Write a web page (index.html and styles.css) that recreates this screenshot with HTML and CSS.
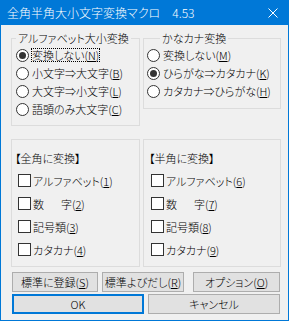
FILE: index.html
```html
<!DOCTYPE html>
<html lang="ja">
<head>
<meta charset="utf-8">
<title>全角半角大小文字変換マクロ</title>
<link rel="stylesheet" href="styles.css">
</head>
<body>
<div class="window">
  <div class="titlebar">
    <span class="title">全角半角大小文字変換マクロ　4.53</span>
    <svg class="close" width="10" height="10" viewBox="0 0 10 10"><path d="M0.5 0.5L9.5 9.5M9.5 0.5L0.5 9.5" stroke="#ffffff" stroke-width="1" fill="none"/></svg>
  </div>
  <div class="content">
    <div class="groups">
      <fieldset class="box box-alpha">
        <legend class="legend legend-alpha">アルファベット大小変換</legend>
        <div class="opt opt-l"><span class="radio on"></span><span class="txt focus">変換しない(<u>N</u>)</span></div>
        <div class="opt opt-l"><span class="radio"></span><span class="txt">小文字⇒大文字(<u>B</u>)</span></div>
        <div class="opt opt-l"><span class="radio"></span><span class="txt">大文字⇒小文字(<u>L</u>)</span></div>
        <div class="opt opt-l"><span class="radio"></span><span class="txt">語頭のみ大文字(<u>C</u>)</span></div>
      </fieldset>
      <fieldset class="box box-kana">
        <legend class="legend legend-kana">かなカナ変換</legend>
        <div class="opt opt-r"><span class="radio"></span><span class="txt">変換しない(<u>M</u>)</span></div>
        <div class="opt opt-r"><span class="radio on"></span><span class="txt">ひらがな⇒カタカナ(<u>K</u>)</span></div>
        <div class="opt opt-r"><span class="radio"></span><span class="txt">カタカナ⇒ひらがな(<u>H</u>)</span></div>
      </fieldset>
    </div>
    <div class="groups lower">
      <div class="panel panel-l">
        <div class="head">【全角に変換】</div>
        <div class="chk"><span class="box13"></span><span class="txt">アルファベット(<u>1</u>)</span></div>
        <div class="chk"><span class="box13"></span><span class="txt">数<span class="wide"></span>字(<u>2</u>)</span></div>
        <div class="chk"><span class="box13"></span><span class="txt">記号類(<u>3</u>)</span></div>
        <div class="chk"><span class="box13"></span><span class="txt">カタカナ(<u>4</u>)</span></div>
      </div>
      <div class="panel panel-r">
        <div class="head">【半角に変換】</div>
        <div class="chk"><span class="box13"></span><span class="txt">アルファベット(<u>6</u>)</span></div>
        <div class="chk"><span class="box13"></span><span class="txt">数<span class="wide"></span>字(<u>7</u>)</span></div>
        <div class="chk"><span class="box13"></span><span class="txt">記号類(<u>8</u>)</span></div>
        <div class="chk"><span class="box13"></span><span class="txt">カタカナ(<u>9</u>)</span></div>
      </div>
    </div>
    <div class="btnrow">
      <button class="btn b-save">標準に登録(<u>S</u>)</button>
      <button class="btn b-load">標準よびだし(<u>R</u>)</button>
      <button class="btn b-opt">オプション(<u>O</u>)</button>
    </div>
    <div class="btnrow okrow">
      <button class="btn b-ok">OK</button>
      <button class="btn b-cancel">キャンセル</button>
    </div>
  </div>
</div>
</body>
</html>
```

FILE: styles.css
```css
* { box-sizing: border-box; }
html, body { margin: 0; padding: 0; background: #f0f0f0; }
body {
  font-family: "Noto Sans CJK JP", "Noto Sans", sans-serif;
  font-size: 11px;
  font-weight: 300;
  color: #000;
  font-feature-settings: "palt";
}
.window {
  width: 289px;
  height: 321px;
  border: 1px solid #0078d7;
  background: #f0f0f0;
  overflow: hidden;
}
.titlebar {
  height: 24px;
  background: #0078d7;
  display: flex;
  align-items: center;
  padding-left: 6px;
  color: #fff;
}
.title { font-size: 12px; line-height: 16px; white-space: pre; }
.close { margin-left: auto; margin-right: 10px; display: block; }
.content { padding: 6px 0 0 10px; }
.groups {
  display: grid;
  grid-template-columns: 129px 138px;
  column-gap: 3px;
  align-items: start;
}
.box {
  margin: 0;
  padding: 0;
  border: 1px solid #dcdcdc;
  min-width: 0;
}
.box-alpha { height: 95px; }
.box-kana { height: 78px; }
.legend { padding: 0 2px; line-height: 15px; }
.legend-alpha { margin-left: 4px; }
.legend-kana { margin-left: 16px; }
.opt {
  height: 18px;
  display: flex;
  align-items: center;
  white-space: nowrap;
}
.opt-l { padding-left: 4px; }
.opt-r { padding-left: 3px; }
.radio {
  width: 13px;
  height: 13px;
  border: 1px solid #333;
  border-radius: 50%;
  background: #fff;
  flex: none;
  display: flex;
  align-items: center;
  justify-content: center;
  margin-right: 3px;
}
.radio.on::after {
  content: "";
  width: 7px;
  height: 7px;
  border-radius: 50%;
  background: #333;
}
.txt { line-height: 14px; white-space: nowrap; }
.focus {
  display: inline-block;
  height: 14px;
  line-height: 14px;
  padding: 0 1px;
  margin-left: -1px;
  outline: 1px dotted #000;
  outline-offset: -1px;
}
u { text-underline-offset: 1px; }
.lower { margin-top: 13px; }
.panel {
  height: 128px;
  border: 1px solid #dcdcdc;
  padding-top: 10px;
}
.panel-l { padding-left: 3px; }
.panel-r { padding-left: 5px; }
.head { line-height: 16px; height: 16px; margin-bottom: 3px; white-space: nowrap; }
.chk {
  height: 23px;
  display: flex;
  align-items: center;
  padding-left: 3px;
}
.panel-r .chk { padding-left: 2px; }
.box13 {
  width: 13px;
  height: 13px;
  border: 1px solid #333;
  background: #fff;
  flex: none;
  margin-right: 2px;
}
.wide { display: inline-block; width: 17px; }
.btnrow {
  display: flex;
  margin-top: 5px;
  margin-left: 1px;
}
.okrow { margin-top: 2px; gap: 4px; }
.btn {
  height: 20px;
  margin: 0;
  padding: 0;
  border: 1px solid #adadad;
  background: #e1e1e1;
  font-family: inherit;
  font-size: 11px;
  font-weight: 300;
  font-feature-settings: "palt";
  color: #000;
  line-height: 16px;
  white-space: nowrap;
}
.b-save { width: 86px; }
.b-load { width: 82px; margin-left: 4px; }
.b-opt { width: 87px; margin-left: 9px; }
.b-ok { width: 132px; border: 2px solid #0078d7; }
.b-cancel { width: 132px; }
```
